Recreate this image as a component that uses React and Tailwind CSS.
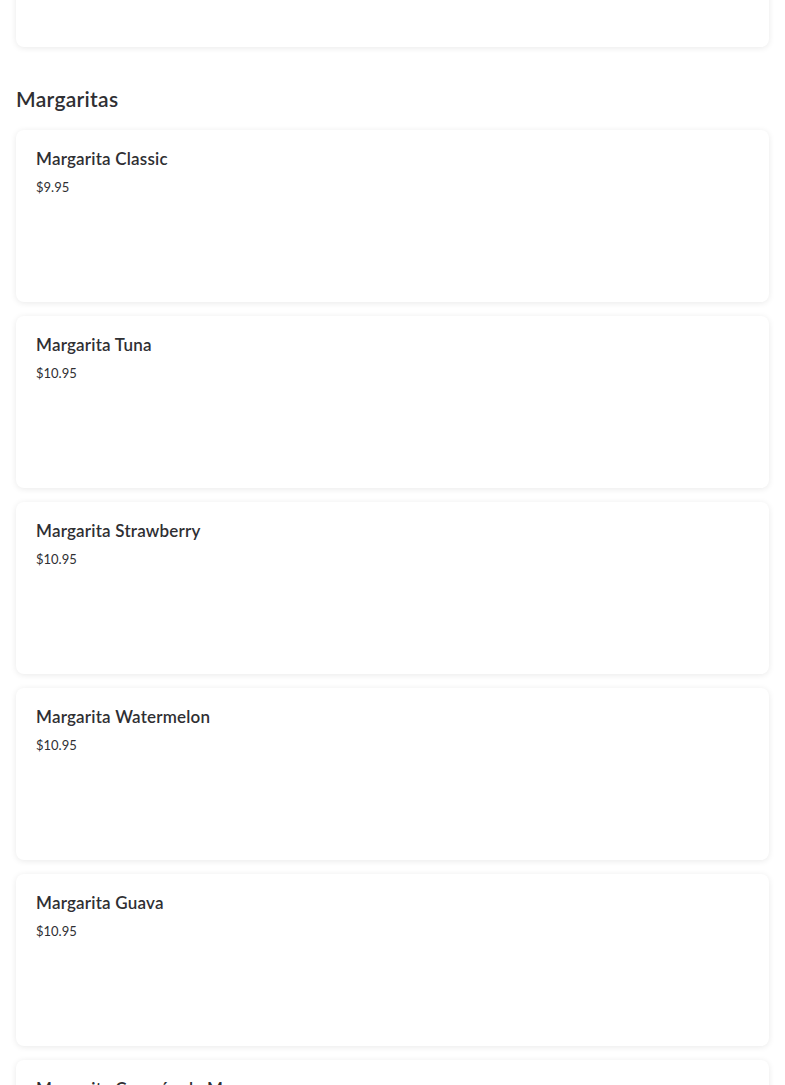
// Menu section: list of margarita cards, each with name and price.

const margaritas = [
  { id: 1, nombre: 'Margarita Classic', precio: '$9.95' },
  { id: 2, nombre: 'Margarita Tuna', precio: '$10.95' },
  { id: 3, nombre: 'Margarita Strawberry', precio: '$10.95' },
  { id: 4, nombre: 'Margarita Watermelon', precio: '$10.95' },
  { id: 5, nombre: 'Margarita Guava', precio: '$10.95' },
  { id: 6, nombre: 'Margarita Corazón de Mango', precio: '$10.95' },
];

function ItemCard({ nombre, precio }) {
  return (
    <div className="h-[172px] bg-white rounded-lg shadow-[0_1px_6px_rgba(0,0,0,0.09)] px-5 pt-[18px]">
      <div className="text-[17px] leading-[22px] font-semibold text-[#2f2f33] tracking-[0.2px]">{nombre}</div>
      <div className="mt-[8px] text-[13px] leading-[18px] text-[#2f2f33]">{precio}</div>
    </div>
  );
}

export default function App() {
  return (
    <div className="min-h-screen bg-white px-4 overflow-hidden" style={{ fontFamily: 'Lato, "Noto Sans", sans-serif' }}>
      <div className="h-[172px] -mt-[125px] bg-white rounded-lg shadow-[0_1px_6px_rgba(0,0,0,0.09)]" />

      <h2 className="mt-[39px] text-[21px] leading-[26px] font-semibold text-[#2f2f33] tracking-[0.3px]">Margaritas</h2>

      <div className="mt-[18px] flex flex-col gap-[14px]">
        {margaritas.map((m) => (
          <ItemCard key={m.id} nombre={m.nombre} precio={m.precio} />
        ))}
      </div>
    </div>
  );
}
